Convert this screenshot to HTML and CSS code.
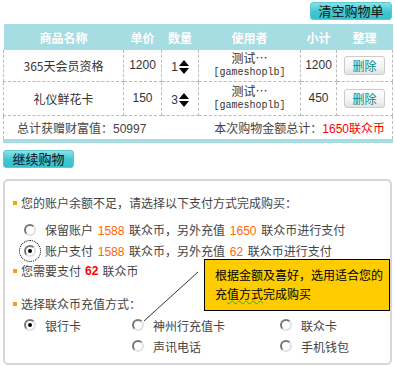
FILE: index.html
```html
<!DOCTYPE html>
<html>
<head>
<meta charset="utf-8">
<link rel="stylesheet" href="styles.css">
</head>
<body>
<div class="page">
  <div class="topbar"><span class="tbtn tbtn-clear">清空购物单</span></div>
  <table class="cart">
    <colgroup>
      <col style="width:120px"><col style="width:38px"><col style="width:37px"><col style="width:102px"><col style="width:36px"><col style="width:56px">
    </colgroup>
    <thead>
      <tr><th>商品名称</th><th>单价</th><th>数量</th><th>使用者</th><th>小计</th><th>整理</th></tr>
    </thead>
    <tbody>
      <tr class="r1">
        <td>365天会员资格</td><td class="num">1200</td>
        <td class="qty"><span class="num">1</span><span class="spin"><i class="up"></i><i class="dn"></i></span></td>
        <td class="user"><div>测试…</div><div class="mono">[gameshoplb]</div></td>
        <td class="num">1200</td><td><span class="del">删除</span></td>
      </tr>
      <tr class="r2">
        <td>礼仪鲜花卡</td><td class="num">150</td>
        <td class="qty"><span class="num">3</span><span class="spin"><i class="up"></i><i class="dn"></i></span></td>
        <td class="user"><div>测试…</div><div class="mono">[gameshoplb]</div></td>
        <td class="num">450</td><td><span class="del">删除</span></td>
      </tr>
      <tr class="total">
        <td colspan="6">
          <div class="totalrow">
            <span>总计获赠财富值：<span class="num">50997</span></span>
            <span>本次购物金额总计：<span class="red num">1650</span><span class="red">联众币</span></span>
          </div>
        </td>
      </tr>
    </tbody>
  </table>
  <div class="contbar"><span class="tbtn tbtn-cont">继续购物</span></div>

  <div class="paybox">
    <div class="line bullet">您的账户余额不足，请选择以下支付方式完成购买：</div>
    <div class="opts">
      <div class="opt"><span class="radio"></span><span>保留账户 <span class="orange num">1588</span> 联众币，另外充值 <span class="orange num">1650</span> 联众币进行支付</span></div>
      <div class="opt"><span class="radio checked focus"></span><span>账户支付 <span class="orange num">1588</span> 联众币，另外充值 <span class="orange num">62</span> 联众币进行支付</span></div>
    </div>
    <div class="line bullet need">您需要支付 <b class="red num">62</b> 联众币</div>
    <div class="line bullet sel">选择联众币充值方式：</div>
    <div class="grid">
      <div class="gi"><span class="radio checked"></span>银行卡</div>
      <div class="gi"><span class="radio"></span>神州行充值卡</div>
      <div class="gi"><span class="radio"></span>联众卡</div>
      <div class="gi"></div>
      <div class="gi"><span class="radio"></span>声讯电话</div>
      <div class="gi"><span class="radio"></span>手机钱包</div>
    </div>

    <svg class="connector" width="70" height="60" viewBox="0 0 70 60"><line x1="1" y1="52" x2="55" y2="3" stroke="#333" stroke-width="1"/></svg>
    <div class="tip">根据金额及喜好，选用适合您的<br>充<span class="wavy">值方式</span>完成购买</div>
  </div>
</div>
</body>
</html>
```
FILE: styles.css
```css
* { box-sizing: border-box; }
body {
  margin: 0;
  background: #fff;
  font-family: "Noto Sans CJK SC", "Liberation Sans", sans-serif;
  font-size: 12px;
  color: #333;
}
.page { width: 395px; height: 366px; overflow: hidden; position: relative; }
.num { font-family: "Liberation Sans", "Noto Sans CJK SC", sans-serif; }
.mono { font-family: "Liberation Mono", monospace; font-size: 10px; }
.red { color: #f00; }
.orange { color: #ff6600; }

.topbar { height: 24px; display: flex; justify-content: flex-end; align-items: flex-start; padding: 2px 3px 0 0; }
.tbtn {
  display: inline-flex; align-items: center; justify-content: center;
  height: 18px; border-radius: 3px;
  background: linear-gradient(#8be0e6, #3fc6d0 55%, #38c1cc);
  border: 1px solid #5fc8d0;
  color: #111; font-size: 13px; line-height: 16px;
}
.tbtn-clear { width: 82px; }
.tbtn-cont { width: 71px; }

.cart {
  margin-left: 3px; width: 389px;
  border-collapse: collapse; table-layout: fixed;
  border-bottom: 4px solid #a6dde3;
}
.cart th {
  background: #a6dde3; color: #fff; font-weight: bold; height: 26px;
  font-size: 12px; padding: 0;
}
.cart td {
  border: 1px dashed #bbb; text-align: center; padding: 0;
  color: #333;
}
.cart tr.r1 td { height: 31px; border-top: none; }
.cart tr.r2 td { height: 34px; }
.cart tr.total td { height: 26px; border-bottom: none; }
.qty { white-space: nowrap; }
.qty .num { vertical-align: middle; }
.spin { display: inline-flex; flex-direction: column; gap: 2px; vertical-align: middle; margin-left: 1px; }
.spin i { width: 0; height: 0; border-left: 5px solid transparent; border-right: 5px solid transparent; }
.spin .up { border-bottom: 6px solid #000; }
.spin .dn { border-top: 6px solid #000; }
.user { line-height: 15px; }
.del {
  display: inline-flex; align-items: center; justify-content: center;
  width: 41px; height: 19px; border: 1px solid #ccc; border-radius: 3px;
  background: linear-gradient(#fff, #f3f3f3 60%, #e2e2e2);
  color: #008a8a; font-size: 12px;
}
.totalrow { display: flex; justify-content: space-between; padding: 0 7px 0 13px; color: #444; }

.contbar { padding: 7px 0 0 3px; height: 28px; }

.paybox {
  position: relative;
  margin: 8px 3px 0 3px; height: 186px;
  border: 2px solid #d6d6d6; border-radius: 5px;
  padding: 12px 0 0 0; color: #444;
}
.line { height: 20px; line-height: 20px; display: flex; align-items: center; }
.bullet::before { content: ""; width: 4px; height: 4px; background: #f7a400; margin: 0 4px 0 8px; }
.opts { margin-top: 6px; }
.opt { height: 21px; display: flex; align-items: center; padding-left: 19px; gap: 9px; word-spacing: 2px; }
.radio {
  display: inline-block; width: 12px; height: 12px; border-radius: 50%;
  border: 2px solid; border-color: #777 #e2e2e2 #e2e2e2 #777; background: #fff;
  position: relative; flex: none;
}
.radio.checked::after {
  content: ""; position: absolute; left: 2px; top: 2px; width: 4px; height: 4px; border-radius: 50%; background: #000;
}
.radio.focus { outline: 1px dotted #000; outline-offset: 4px; }
.need { margin-top: 0; }
.need b { margin: 0 4px; }
.sel { margin-top: 13px; }
.grid { display: grid; grid-template-columns: 108px 148px 100px; padding-left: 19px; row-gap: 1px; margin-top: 1px; }
.gi { height: 20px; display: flex; align-items: center; gap: 9px; }

.connector { position: absolute; left: 138px; top: 88px; }
.tip {
  position: absolute; left: 199px; top: 78px; width: 186px; height: 52px;
  background: #ffcc00; border: 1px solid #000; color: #000;
  padding: 5px 0 0 10px; line-height: 19px; font-size: 12px;
}
.wavy { text-decoration: underline wavy #33aa33; text-decoration-thickness: 1px; }
```
